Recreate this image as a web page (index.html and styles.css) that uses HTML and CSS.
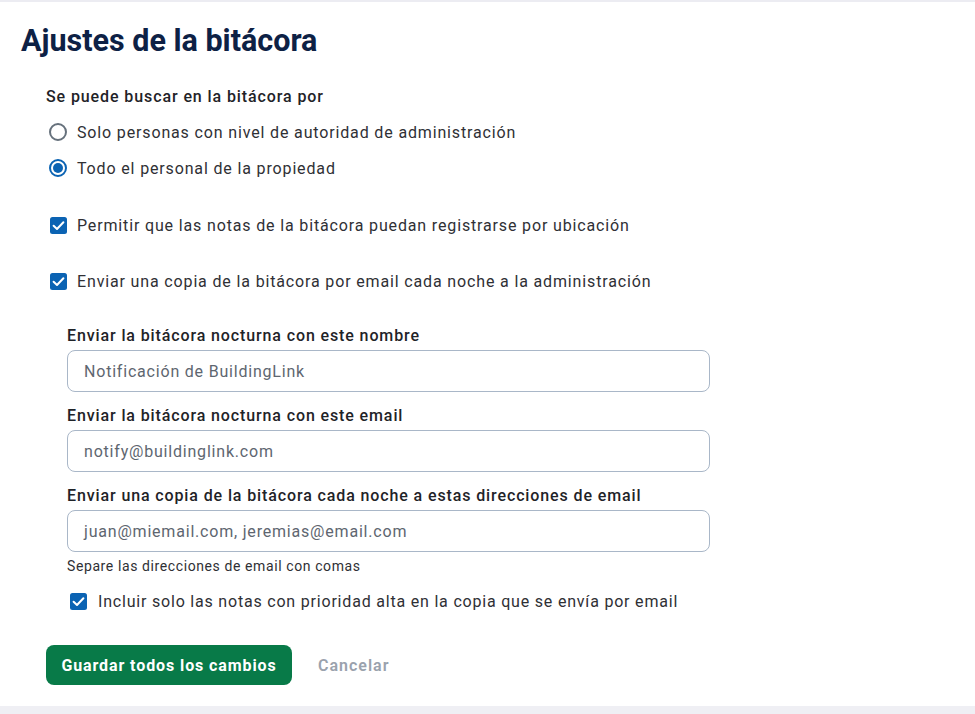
FILE: index.html
```html
<!DOCTYPE html>
<html lang="es">
<head>
<meta charset="utf-8">
<title>Ajustes de la bitácora</title>
<link rel="stylesheet" href="styles.css">
</head>
<body>
<div class="topbar"></div>
<main class="page">
  <h1 class="title">Ajustes de la bitácora</h1>
  <div class="settings">
    <div class="section-title">Se puede buscar en la bitácora por</div>
    <div class="radios">
      <div class="row radio-row">
        <span class="radio"></span>
        <span class="row-text">Solo personas con nivel de autoridad de administración</span>
      </div>
      <div class="row radio-row">
        <span class="radio checked"></span>
        <span class="row-text">Todo el personal de la propiedad</span>
      </div>
    </div>
    <div class="row check-row first-check">
      <svg class="checkbox" viewBox="0 0 17 17" width="17" height="17"><rect x="0" y="0" width="17" height="17" rx="2.5" fill="#0b63b3"/><path d="M3.6 8.8 L7 12 L13.4 5.2" fill="none" stroke="#fff" stroke-width="2" stroke-linecap="round" stroke-linejoin="round"/></svg>
      <span class="row-text">Permitir que las notas de la bitácora puedan registrarse por ubicación</span>
    </div>
    <div class="row check-row second-check">
      <svg class="checkbox" viewBox="0 0 17 17" width="17" height="17"><rect x="0" y="0" width="17" height="17" rx="2.5" fill="#0b63b3"/><path d="M3.6 8.8 L7 12 L13.4 5.2" fill="none" stroke="#fff" stroke-width="2" stroke-linecap="round" stroke-linejoin="round"/></svg>
      <span class="row-text">Enviar una copia de la bitácora por email cada noche a la administración</span>
    </div>
    <div class="nested">
      <label class="field-label first-label">Enviar la bitácora nocturna con este nombre</label>
      <div class="input"><span>Notificación de BuildingLink</span></div>
      <label class="field-label">Enviar la bitácora nocturna con este email</label>
      <div class="input"><span>notify@buildinglink.com</span></div>
      <label class="field-label">Enviar una copia de la bitácora cada noche a estas direcciones de email</label>
      <div class="input"><span>juan@miemail.com, jeremias@email.com</span></div>
      <div class="help">Separe las direcciones de email con comas</div>
      <div class="row check-row nested-check">
        <svg class="checkbox" viewBox="0 0 17 17" width="17" height="17"><rect x="0" y="0" width="17" height="17" rx="2.5" fill="#0b63b3"/><path d="M3.6 8.8 L7 12 L13.4 5.2" fill="none" stroke="#fff" stroke-width="2" stroke-linecap="round" stroke-linejoin="round"/></svg>
        <span class="row-text">Incluir solo las notas con prioridad alta en la copia que se envía por email</span>
      </div>
    </div>
    <div class="actions">
      <button class="btn-primary">Guardar todos los cambios</button>
      <button class="btn-link">Cancelar</button>
    </div>
  </div>
</main>
<div class="bottombar"></div>
</body>
</html>
```
FILE: styles.css
```css
* { box-sizing: border-box; }
html, body { margin: 0; padding: 0; background: #fff; }
body {
  font-family: Roboto, "Liberation Sans", Arial, sans-serif;
  color: #2e2e33;
  width: 975px;
  height: 714px;
  overflow: hidden;
}
.topbar { height: 2px; background: #ececf2; }
.page { padding-left: 21px; }
.title {
  margin: 0;
  padding-top: 20px;
  font-size: 30.5px;
  line-height: 38px;
  font-weight: 700;
  color: #0d2145;
  letter-spacing: 0;
}
.settings { margin-left: 25px; }
.section-title {
  margin-top: 25px;
  height: 24px;
  line-height: 24px;
  font-size: 16px;
  font-weight: 500;
  letter-spacing: 0.9px;
  color: #1f2328;
}
.radios { margin-top: 5px; }
.row {
  display: flex;
  align-items: center;
  font-size: 16px;
  letter-spacing: 0.85px;
  color: #2f3035;
}
.radio-row { height: 36px; }
.radio {
  width: 18px;
  height: 18px;
  margin-left: 3px;
  margin-right: 10px;
  border: 2px solid #66717c;
  border-radius: 50%;
  flex: none;
  position: relative;
}
.radio.checked { border-color: #0b63b3; }
.radio.checked::after {
  content: "";
  position: absolute;
  left: 2px; top: 2px;
  width: 10px; height: 10px;
  border-radius: 50%;
  background: #0b63b3;
}
.check-row { height: 36px; }
.checkbox { flex: none; margin-left: 4px; margin-right: 10px; }
.first-check { margin-top: 21px; }
.second-check { margin-top: 20px; }
.nested { margin-left: 21px; }
.field-label {
  display: block;
  height: 20px;
  line-height: 20px;
  margin-top: 14px;
  margin-bottom: 4px;
  font-size: 16px;
  font-weight: 500;
  letter-spacing: 0.88px;
  color: #1f2328;
}
.first-label { margin-top: 27px; }
.input {
  width: 643px;
  height: 42px;
  border: 1.5px solid #a9b7c8;
  border-radius: 8px;
  display: flex;
  align-items: center;
  padding-left: 16px;
  font-size: 16px;
  letter-spacing: 0.8px;
  color: #5e6670;
}
.help {
  margin-top: 6px;
  height: 16px;
  line-height: 16px;
  font-size: 14px;
  letter-spacing: 0.6px;
  color: #2f3035;
}
.nested-check { margin-top: 13px; height: 28px; }
.nested-check .checkbox { margin-left: 3px; margin-right: 11px; }
.nested-check .row-text { letter-spacing: 0.8px; }
.actions {
  margin-top: 30px;
  display: flex;
  align-items: center;
  gap: 26px;
}
.btn-primary {
  height: 40px;
  width: 246px;
  border: none;
  border-radius: 8px;
  background: #087a48;
  color: #fff;
  font-family: Roboto, "Liberation Sans", Arial, sans-serif;
  font-size: 16px;
  font-weight: 700;
  letter-spacing: 0.9px;
  padding: 0;
}
.btn-link {
  border: none;
  background: none;
  padding: 0;
  font-family: Roboto, "Liberation Sans", Arial, sans-serif;
  font-size: 16px;
  font-weight: 600;
  letter-spacing: 1px;
  color: #9aa2ad;
}
.bottombar { margin-top: 21px; height: 10px; background: #efeff4; }
```
